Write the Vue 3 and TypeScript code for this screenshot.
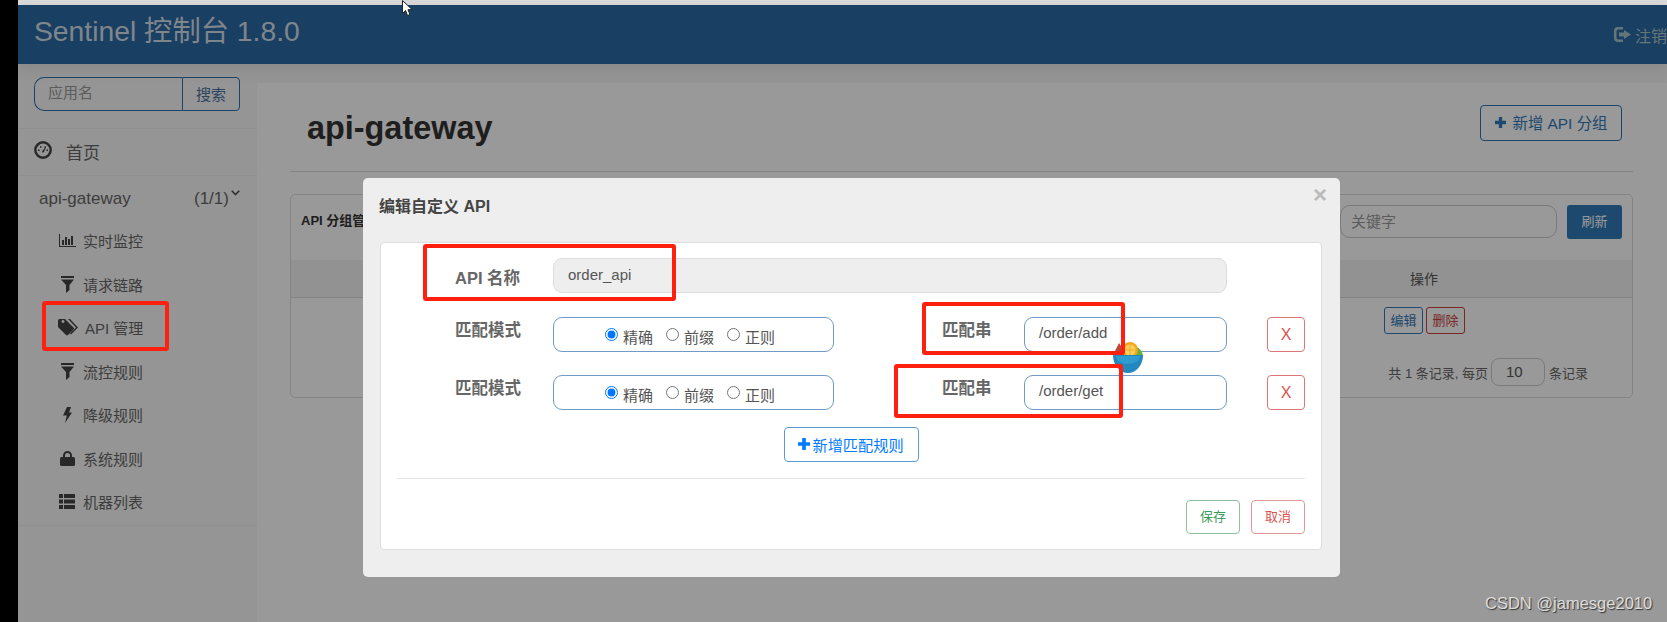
<script setup lang="ts">
interface NavItem { label: string; vb: string; w: number; h: number; d: string }
const nav: NavItem[] = [
  { label: '实时监控', vb: '0 0 17 13', w: 17, h: 13, d: 'M0 0h1v12h16v1H0z M3 6h2v5H3z M6 3h2v8H6z M9 5h2v6H9z M12 2h2v9h-2z' },
  { label: '请求链路', vb: '0 0 13 17', w: 13, h: 17, d: 'M0 0h13v2H0z M0 3.5h13L8.5 9v5L5 17V9z' },
  { label: 'API 管理', vb: '0 0 20 17', w: 20, h: 17, d: 'M0 1.5A1.5 1.5 0 0 1 1.5 0H7l8.5 8.5a1.5 1.5 0 0 1 0 2L10 16a1.5 1.5 0 0 1-2 0L0 8z M5 4a1.5 1.5 0 1 0-.01 0z M10 0h2l8 8.5-7 7-1-1 6-6z' },
  { label: '流控规则', vb: '0 0 13 17', w: 13, h: 17, d: 'M0 0h13v2H0z M0 3.5h13L8.5 9v5L5 17V9z' },
  { label: '降级规则', vb: '0 0 10 16', w: 10, h: 16, d: 'M5 0h4L7 5.5h3L3 16l1.8-7.5H1z' },
  { label: '系统规则', vb: '0 0 15 15', w: 15, h: 15, d: 'M3 6V4.5a4.5 4.5 0 0 1 9 0V6h1.5A1.5 1.5 0 0 1 15 7.5v6a1.5 1.5 0 0 1-1.5 1.5h-12A1.5 1.5 0 0 1 0 13.5v-6A1.5 1.5 0 0 1 1.5 6z M5 6h5V4.5a2.5 2.5 0 0 0-5 0z' },
  { label: '机器列表', vb: '0 0 16 15', w: 16, h: 15, d: 'M0 0h4v4H0z M5 0h11v4H5z M0 5.5h4v4H0z M5 5.5h11v4H5z M0 11h4v4H0z M5 11h11v4H5z' }
]
const matchRows = [
  { path: '/order/add' },
  { path: '/order/get' }
]
const modes = ['精确', '前缀', '正则']
</script>

<template>
  <div class="root">
    <div class="blackbar"></div>
    <div class="stage">
      <div class="strip"></div>
      <div class="app">
        <header class="topbar">
          <span class="brand">Sentinel 控制台 1.8.0</span>
          <span class="logout">
            <svg class="logout-ico" viewBox="0 0 18 15" width="18" height="15">
              <path fill="currentColor" d="M4 0h5v2.5H4.500A2 2 0 0 0 2.500 4.500v6a2 2 0 0 0 2 2H9V15H4a4 4 0 0 1-4-4V4a4 4 0 0 1 4-4z M10 3l7 4.500-7 4.500V9.500H5v-4h5z" />
            </svg>
            注销
          </span>
        </header>
        <div class="body">
          <aside class="side">
            <div class="search">
              <div class="search-input">应用名</div>
              <div class="search-btn">搜索</div>
            </div>
            <div class="home">
              <svg viewBox="0 0 18 18" width="18" height="18" class="home-ico">
                <circle cx="9" cy="9" r="7.700" fill="none" stroke="currentColor" stroke-width="2.400" />
                <path fill="currentColor" d="M4 8.500h1.600v1.600H4z M12.400 8.500H14v1.600h-1.600z M6 5.300h1.500v1.500H6z M10.500 5.300H12v1.500h-1.500z M8 10.500 11 6.500l.7.500-2 4.300a1.100 1.100 0 0 1-1.700-.800z" />
              </svg>
              <span class="home-text">首页</span>
            </div>
            <div class="app-row">
              <span class="app-name">api-gateway</span>
              <span class="app-count">(1/1)</span>
              <svg class="chev" viewBox="0 0 9 6" width="9" height="6"><path d="M.7.700 4.500 4.500 8.300.700" fill="none" stroke="currentColor" stroke-width="1.400" /></svg>
            </div>
            <ul class="sub">
              <li v-for="item in nav" :key="item.label" class="sub-item">
                <span class="sub-ico">
                  <svg :viewBox="item.vb" :width="item.w" :height="item.h"><path fill="currentColor" fill-rule="evenodd" :d="item.d" /></svg>
                </span>
                <span class="sub-text">{{ item.label }}</span>
              </li>
            </ul>
          </aside>
          <main class="main">
            <div class="title-row">
              <h1 class="title">api-gateway</h1>
              <button class="btn-add-group">
                <svg viewBox="0 0 10 10" width="11" height="11"><path fill="currentColor" d="M3.500 0h3v3.500H10v3H6.500V10h-3V6.500H0v-3h3.500z" /></svg>
                新增 API 分组
              </button>
            </div>
            <section class="panel">
              <div class="panel-head">
                <b class="panel-title">API 分组管理</b>
                <div class="kw">关键字</div>
                <button class="refresh">刷新</button>
              </div>
              <div class="thead"><span></span><span class="op">操作</span></div>
              <div class="trow">
                <span></span>
                <span class="op op-btns"><button class="mini blue">编辑</button><button class="mini red">删除</button></span>
              </div>
              <div class="pager">共 1 条记录, 每页<span class="pager-input">10</span>条记录</div>
            </section>
          </main>
        </div>
      </div>
      <div class="scrim">
        <div class="modal">
          <span class="close">×</span>
          <h4 class="modal-title">编辑自定义 API</h4>
          <div class="inner">
            <div class="row first">
              <label class="lbl lbl-a">API 名称</label>
              <div class="ctl name-input">order_api</div>
            </div>
            <div v-for="r in matchRows" :key="r.path" class="row">
              <label class="lbl">匹配模式</label>
              <div class="ctl radios">
                <span v-for="(m, i) in modes" :key="m" class="radio">
                  <input type="radio" :checked="i === 0" :name="r.path" />
                  <span>{{ m }}</span>
                </span>
              </div>
              <label class="lbl lbl-s">匹配串</label>
              <div class="ctl path">{{ r.path }}</div>
              <button class="x">X</button>
            </div>
            <div class="add-wrap">
              <button class="add">
                <svg viewBox="0 0 10 10" width="12" height="12"><path fill="currentColor" d="M3.500 0h3v3.500H10v3H6.500V10h-3V6.500H0v-3h3.500z" /></svg>
                新增匹配规则
              </button>
            </div>
            <hr class="rule" />
            <div class="foot">
              <button class="ft green">保存</button>
              <button class="ft danger">取消</button>
            </div>
          </div>
        </div>
      </div>
    </div>

    <svg class="fruit" viewBox="0 0 30 31" width="30" height="31">
      <path d="M0 13 6 1l6 9v5H1z" fill="#b8483a" />
      <path d="M23 5c4 1 7 5 7 10h-8z" fill="#6cae3e" />
      <circle cx="17" cy="8" r="8" fill="#f2a81c" />
      <circle cx="17" cy="8" r="5.500" fill="#f9d25e" />
      <path d="M17 3v10M12 8h10" stroke="#f2a81c" stroke-width="1" />
      <path d="M0 13h30a15 18 0 0 1-30 0z" fill="#2288bd" />
      <path d="M3 14h24a12 8 0 0 1-24 0z" fill="#2f9ccf" />
    </svg>

    <div class="mark mark-api"></div>
    <div class="mark mark-name"></div>
    <div class="mark mark-s1"></div>
    <div class="mark mark-s2"></div>

    <svg class="cursor" viewBox="0 0 11 17" width="11" height="17">
      <path d="M.5.500v13l3-3 2 5 2.500-1-2-4.800h4.200z" fill="#fff" stroke="#222" stroke-width="1" />
    </svg>

    <div class="watermark">CSDN @jamesge2010</div>
  </div>
</template>

<style>
html, body { margin: 0; overflow: hidden; background: #000; }
</style>

<style scoped>
* { box-sizing: border-box; }
.root {
  position: relative;
  display: flex;
  width: 1667px;
  height: 622px;
  overflow: hidden;
  font-family: "Liberation Sans", "Noto Sans CJK SC", sans-serif;
  color: #333;
  background: #000;
}
.blackbar { width: 18px; flex: none; background: #000; }
.stage { position: relative; flex: 1; min-width: 0; display: flex; flex-direction: column; }
.strip { height: 5px; flex: none; background: #dcdcdc; }
.app { flex: 1; display: flex; flex-direction: column; background: #fff; min-height: 0; }
.topbar {
  position: relative;
  z-index: 1;
  height: 59px;
  flex: none;
  display: flex;
  align-items: center;
  justify-content: space-between;
  padding-left: 16px;
  background: #2b69a5;
  box-shadow: 0 3px 16px rgba(0, 0, 0, 0.1);
}
.brand { font-size: 28.300px; color: #d4dfe8; position: relative; top: -6px; }
.logout { display: flex; align-items: center; gap: 3px; font-size: 16px; color: #a9c5c9; position: relative; top: 0; }
.logout-ico { flex: none; }
.body { flex: 1; display: flex; min-height: 0; }
.side { width: 239px; flex: none; background: #f8f8f8; color: #666; }
.search { display: flex; height: 34px; margin: 13px 17px 17px 16px; }
.search-input {
  width: 148px;
  border: 1px solid #2f6fae;
  border-right: 0;
  border-radius: 10px 0 0 10px;
  color: #999;
  font-size: 15px;
  line-height: 30px;
  padding-left: 13px;
}
.search-btn {
  flex: 1;
  border: 1px solid #2f6fae;
  border-radius: 0 4px 4px 0;
  color: #4c74a0;
  font-size: 15px;
  line-height: 33px;
  text-align: center;
}
.home {
  display: flex;
  align-items: center;
  height: 48px;
  padding-left: 16px;
  border-top: 1px solid #eee;
  border-bottom: 1px solid #eee;
  font-size: 17px;
  gap: 14px;
  color: #666;
}
.home-ico { color: #444; position: relative; top: -2px; }
.home-text { position: relative; top: -1px; }
.app-row { display: flex; align-items: center; height: 44px; padding-left: 21px; font-size: 17px; position: relative; }
.app-name { width: 155px; position: relative; top: 1px; }
.app-count { position: relative; top: 1px; }
.chev { margin-left: 2px; position: relative; top: -5px; color: #444; }
.sub { list-style: none; margin: 0; padding: 0 0 0 40px; border-bottom: 1px solid #eee; }
.sub-item { display: flex; align-items: center; height: 43.500px; font-size: 15px; color: #666; gap: 7px; }
.sub-text { position: relative; top: -1px; }
.sub-ico { display: flex; justify-content: center; min-width: 18px; color: #444; position: relative; top: -1px; }
.main { flex: 1; min-width: 0; padding: 0 34px 0 33px; background: linear-gradient(#f8f8f8 19px, #fff 19px); }
.title-row {
  display: flex;
  justify-content: space-between;
  height: 108px;
  padding: 41px 11px 0 17px;
  border-bottom: 1px solid #ddd;
}
.title { margin: 0; font-size: 32.400px; line-height: 46px; font-weight: 700; color: #333; }
.btn-add-group {
  width: 142px;
  height: 36px;
  border: 1px solid #2e74b5;
  border-radius: 4px;
  background: transparent;
  color: #337ab7;
  font: 15.400px "Liberation Sans", "Noto Sans CJK SC", sans-serif;
  display: flex;
  align-items: center;
  justify-content: center;
  gap: 7px;
  padding: 0 0 2px;
}
.panel { margin-top: 22px; height: 204px; border: 1px solid #ddd; border-radius: 5px; }
.panel-head { position: relative; height: 65px; display: flex; padding: 10px 10px 0 10px; align-items: flex-start; }
.panel-title { font-size: 13px; margin-top: 5px; flex: 1; color: #333; }
.kw {
  width: 217px;
  height: 33px;
  border: 1px solid #ccc;
  border-radius: 10px;
  font-size: 15px;
  color: #999;
  line-height: 31px;
  padding-left: 10px;
}
.refresh {
  width: 55px;
  height: 34px;
  margin-left: 10px;
  border: 0;
  border-radius: 3px;
  background: #337ab7;
  color: #fff;
  font: 13px "Liberation Sans", "Noto Sans CJK SC", sans-serif;
  padding: 0 0 3px;
}
.thead {
  display: grid;
  grid-template-columns: 1fr 416px;
  height: 38px;
  align-items: center;
  background: #f3f3f3;
  border-bottom: 1px solid #ddd;
  font-size: 14px;
  color: #555;
}
.op { text-align: center; position: relative; top: -1px; }
.trow { display: grid; grid-template-columns: 1fr 416px; padding-top: 9px; height: 60px; }
.op-btns { display: flex; justify-content: center; gap: 3px; align-items: flex-start; padding-left: 1px; top: 0; }
.mini {
  width: 39px;
  height: 27px;
  padding: 0 0 2px;
  background: transparent;
  border: 1px solid;
  border-radius: 3px;
  font: 13px "Liberation Sans", "Noto Sans CJK SC", sans-serif;
}
.mini.blue { color: #337ab7; border-color: #337ab7; }
.mini.red { color: #c9413d; border-color: #c9413d; }
.pager { display: flex; justify-content: flex-end; align-items: center; padding-right: 44px; font-size: 13px; color: #666; height: 28px; }
.pager-input {
  width: 54px;
  height: 28px;
  margin: 0 4px 0 3px;
  border: 1px solid #ccc;
  border-radius: 8px;
  color: #555;
  font-size: 15px;
  line-height: 26px;
  padding-left: 14px;
}
.scrim {
  position: absolute;
  inset: 5px 0 0 0;
  z-index: 2;
  background: rgba(0, 0, 0, 0.4);
  padding: 173px 0 0 345px;
}
.modal {
  position: relative;
  width: 977px;
  height: 399px;
  padding: 0 18px 0 17px;
  background: #eee;
  border-radius: 5px;
}
.close {
  position: absolute;
  right: 13px;
  top: 3px;
  font: 700 24px/28px "Liberation Sans", sans-serif;
  color: #bbb;
}
.modal-title { margin: 0 0 0 -1px; height: 64px; padding-top: 18px; font-size: 16px; line-height: 21px; font-weight: 700; color: #444; }
.inner { height: 308px; background: #fff; border: 1px solid #ddd; border-radius: 4px; padding-top: 15px; }
.row { display: flex; align-items: flex-start; padding-left: 74px; height: 35px; margin-bottom: 23px; }
.row.first { margin-bottom: 24px; }
.lbl { width: 98px; font-size: 16.500px; font-weight: 700; color: #666; line-height: 20px; padding-top: 3px; white-space: nowrap; }
.lbl-a { padding-top: 10px; }
.lbl-s { width: 82px; margin-left: 108px; }
.ctl { height: 35px; border: 1px solid #6f9bc6; border-radius: 9px; font-size: 15px; color: #555; }
.name-input { width: 674px; background: #eee; border-color: #ddd; line-height: 31px; padding-left: 14px; }
.radios { width: 281px; display: flex; justify-content: center; align-items: center; gap: 13px; padding: 2px 7px 0 0; }
.radio { display: flex; align-items: center; gap: 5px; }
.radio input { width: 13px; height: 13px; margin: 0; position: relative; top: -1px; }
.radio span { position: relative; top: 1px; }
.path { width: 203px; line-height: 30px; padding-left: 14px; }
.x {
  width: 38px;
  height: 35px;
  margin-left: 40px;
  border: 1px solid #d77;
  border-radius: 4px;
  background: #fff;
  color: #d9534f;
  font: 16px "Liberation Sans", sans-serif;
  padding: 0;
}
.add-wrap { display: flex; justify-content: center; margin-top: -6px; }
.add {
  width: 135px;
  height: 35px;
  border: 1px solid #5b9bd5;
  border-radius: 4px;
  background: #fff;
  color: #007bff;
  font: 15.200px "Liberation Sans", "Noto Sans CJK SC", sans-serif;
  display: flex;
  align-items: center;
  justify-content: center;
  gap: 2px;
  padding: 0 0 2px;
}
.rule { margin: 16px 16px 0 16px; border: 0; border-top: 1px solid #e5e5e5; }
.foot { display: flex; justify-content: flex-end; gap: 11px; padding: 21px 16px 0 0; }
.ft { width: 54px; height: 34px; padding: 0 0 3px; background: #fff; border: 1px solid; border-radius: 4px; font: 13px "Liberation Sans", "Noto Sans CJK SC", sans-serif; }
.green { color: #3d9a5b; border-color: #8fbf9f; }
.danger { color: #d9534f; border-color: #e09a98; }
.mark { position: absolute; z-index: 4; border: 4px solid #ff2010; border-radius: 3px; }
.mark-api { left: 42px; top: 301px; width: 127px; height: 50px; }
.mark-name { left: 423px; top: 244px; width: 253px; height: 57px; }
.mark-s1 { left: 922px; top: 302px; width: 203px; height: 53px; }
.mark-s2 { left: 894px; top: 364px; width: 229px; height: 54px; }
.fruit { position: absolute; z-index: 3; left: 1113px; top: 342px; }
.cursor { position: absolute; z-index: 4; left: 402px; top: 0; }
.watermark {
  position: absolute;
  z-index: 4;
  left: 1485px;
  top: 594px;
  font: 16.500px/18px "Liberation Sans", sans-serif;
  color: #ddd;
  text-shadow: 1px 1px 1px #333;
}
</style>
